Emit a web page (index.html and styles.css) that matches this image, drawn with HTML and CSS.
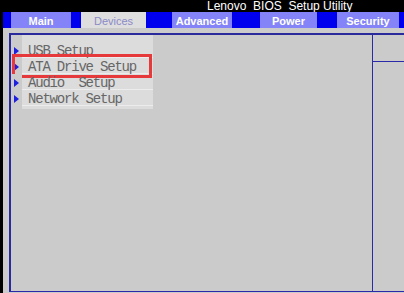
FILE: index.html
```html
<!DOCTYPE html>
<html lang="en">
<head>
    <meta charset="UTF-8">
    <meta name="viewport" content="width=device-width, initial-scale=1.0">
    <title>Lenovo BIOS Setup Utility</title>
    <link rel="stylesheet" href="styles.css">
</head>
<body>
    <!-- title -->
    <header class="titlebar"><span>Lenovo&nbsp; BIOS&nbsp; Setup Utility</span></header>

    <div class="shell">
        <!-- tabs -->
        <nav class="tabs">
            <span class="tab tab-main">Main</span>
            <span class="tab tab-devices active">Devices</span>
            <span class="tab tab-advanced">Advanced</span>
            <span class="tab tab-power">Power</span>
            <span class="tab tab-security">Security</span>
        </nav>

        <main class="screen">
            <div class="frame">
                <section class="left">
                    <ul class="menu">
                        <li><span class="arrow"></span><span class="label">USB Setup</span></li>
                        <li class="selected"><span class="arrow"></span><span class="label">ATA Drive Setup</span></li>
                        <li><span class="arrow"></span><span class="label">Audio  Setup</span></li>
                        <li><span class="arrow"></span><span class="label">Network Setup</span></li>
                    </ul>
                </section>
                <aside class="help">
                    <div class="help-top"></div>
                </aside>
            </div>
        </main>
    </div>
</body>
</html>
```

FILE: styles.css
```css
html, body {
    margin: 0;
    padding: 0;
    height: 293px;
    overflow: hidden;
    background-color: #000;
}
.titlebar {
    height: 12px;
    padding-left: 207px;
    color: #fff;
    font: 12px/12px "Liberation Sans", Arial, sans-serif;
}
.shell {
    margin-left: 3px;
}
.tabs {
    display: flex;
    height: 16px;
    background-color: #0000ee;
}
.tab {
    height: 16px;
    text-align: center;
    color: #fff;
    background-color: #8484f8;
    font: bold 11px/18px "Liberation Sans", Arial, sans-serif;
}
.tab-main { margin-left: 8px; width: 60px; }
.tab-devices { margin-left: 10px; width: 65px; }
.tab-advanced { margin-left: 26px; width: 60px; }
.tab-power { margin-left: 28px; width: 57px; }
.tab-security { margin-left: 20px; width: 62px; }
.tab.active {
    background-color: #dedede;
    color: #8a8ac8;
    font-weight: normal;
}
.screen {
    box-sizing: border-box;
    height: 265px;
    padding: 5px 0 0 6px;
    background-color: #cbcbcb;
}
.frame {
    box-sizing: border-box;
    height: 259px;
    border-top: 2px solid #2a2a9c;
    border-left: 2px solid #2a2a9c;
    border-bottom: 1px solid #2a2aa8;
    display: grid;
    grid-template-columns: 1fr 32px;
}
.help {
    border-left: 1px solid #2a2aa8;
}
.help-top {
    height: 26px;
    border-bottom: 1px solid #2a2aa8;
}
.menu {
    list-style: none;
    margin: 0 0 0 11px;
    padding: 7px 0 3px;
    width: 131px;
    background-color: #dcdcdc;
}
.menu li {
    position: relative;
    display: flex;
    align-items: center;
    height: 16px;
    margin-left: -11px;
}
.arrow {
    width: 11px;
    height: 16px;
    background-color: #cbcbcb;
    display: flex;
    align-items: center;
}
.arrow::before {
    content: "";
    margin: 2px 0 0 3px;
    border-left: 5px solid #1f1fe0;
    border-top: 4px solid transparent;
    border-bottom: 4px solid transparent;
}
.label {
    flex: 1;
    box-sizing: border-box;
    height: 16px;
    padding: 2px 0 0 6px;
    border-bottom: 1px solid #ececec;
    color: #666;
    white-space: pre;
    font: 14px/15px "Liberation Mono", "Courier New", monospace;
    letter-spacing: -1.2px;
}
/* red highlight box */
.selected::after {
    content: "";
    position: absolute;
    left: 1px;
    right: 1px;
    top: -4px;
    bottom: -4px;
    border: 3px solid #e5393b;
}
```
